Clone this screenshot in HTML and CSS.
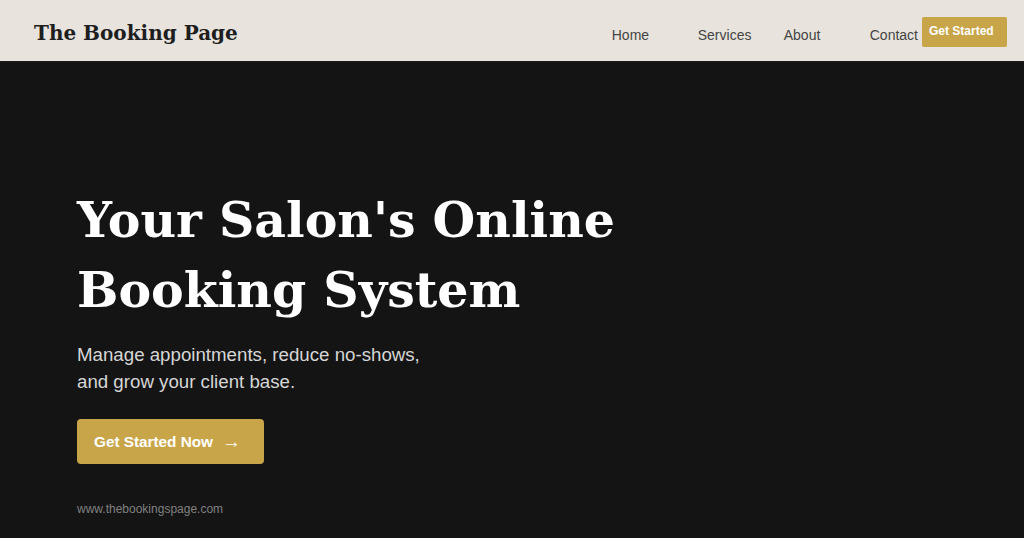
FILE: index.html
```html
<!DOCTYPE html>
<html lang="en">
<head>
<meta charset="utf-8">
<title>The Booking Page</title>
<link rel="stylesheet" href="styles.css">
</head>
<body>
<header class="site-header">
  <div class="logo">The Booking Page</div>
  <nav class="nav">
    <a class="nav-link" href="#">Home</a>
    <a class="nav-link" href="#">Services</a>
    <a class="nav-link" href="#">About</a>
    <a class="nav-link nav-link-last" href="#">Contact</a>
    <a class="nav-cta" href="#">Get Started</a>
  </nav>
</header>
<main class="hero">
  <h1 class="hero-title">Your Salon's Online<br>Booking System</h1>
  <p class="hero-sub">Manage appointments, reduce no-shows,<br>and grow your client base.</p>
  <a class="hero-btn" href="#">Get Started Now <span class="arrow">&rarr;</span></a>
  <div class="hero-url">www.thebookingspage.com</div>
</main>
</body>
</html>
```
FILE: styles.css
```css
* { box-sizing: border-box; }
html, body { margin: 0; padding: 0; }
body {
  background: #141414;
  font-family: "Liberation Sans", Arial, sans-serif;
  height: 538px;
  overflow: hidden;
}
.site-header {
  height: 62px;
  background: #e8e4dd;
  border-bottom: 1px solid #1a1a1a;
  display: flex;
  align-items: center;
  justify-content: space-between;
  padding: 0 17px 0 34px;
}
.logo {
  font-family: "DejaVu Serif", Georgia, serif;
  font-weight: bold;
  font-size: 20px;
  color: #1e1e1e;
  margin-top: 5px;
}
.nav {
  display: flex;
  align-items: center;
  margin-top: 3px;
}
.nav-link {
  width: 86px;
  color: #444;
  text-decoration: none;
  font-size: 14px;
  padding-top: 6px;
}
.nav-link-last { width: auto; margin-right: 4px; }
.nav-cta {
  background: #c9a54a;
  color: #fff;
  font-weight: bold;
  font-size: 12px;
  text-decoration: none;
  width: 85px;
  height: 30px;
  display: flex;
  align-items: center;
  justify-content: flex-start;
  padding-left: 7px;
  border-radius: 2px;
  padding-bottom: 2px;
}
.hero {
  padding: 123px 0 0 77px;
}
.hero-title {
  margin: 0;
  font-family: "DejaVu Serif", Georgia, serif;
  font-weight: bold;
  font-size: 49px;
  line-height: 70px;
  color: #fff;
}
.hero-sub {
  margin: 16px 0 0;
  color: #d6d6d6;
  font-size: 18.7px;
  line-height: 27px;
}
.hero-btn {
  margin-top: 24px;
  width: 187px;
  height: 45px;
  display: flex;
  align-items: center;
  padding-left: 17px;
  background: #c9a54a;
  color: #fff;
  font-weight: bold;
  font-size: 15.3px;
  text-decoration: none;
  border-radius: 4px;
}
.arrow { margin-left: 9px; font-weight: normal; font-size: 19px; }
.hero-url {
  margin-top: 38px;
  color: #808080;
  font-size: 12px;
}
```
